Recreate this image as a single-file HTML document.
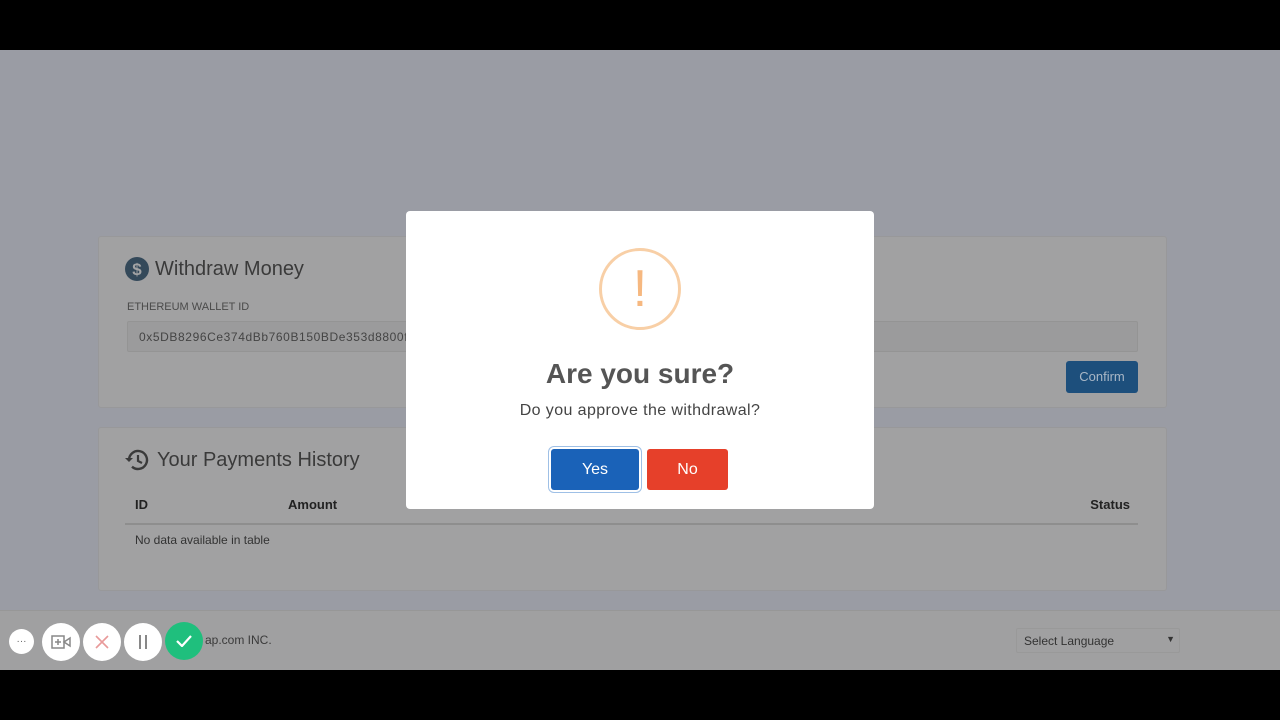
<!DOCTYPE html>
<html><head><meta charset="utf-8"><style>
*{box-sizing:border-box;margin:0;padding:0}
body{width:1280px;height:720px;background:#000;font-family:"Liberation Sans",sans-serif;position:relative;overflow:hidden}
.page{position:absolute;left:0;top:50px;width:1280px;height:620px;background:#9a9ca4}
.card{position:absolute;left:98px;width:1069px;background:#a1a1a2;border:1px solid #98989a;border-radius:3px}
.h{position:absolute;left:26px;font-size:20px;color:#3a3a3a;display:flex;align-items:center;gap:6px}
.footer{position:absolute;left:0;top:610px;width:1280px;height:60px;background:#a0a0a1;border-top:1px solid #979797}
.modal{position:absolute;left:406px;top:211px;width:468px;height:298px;background:#fff;border-radius:4px;text-align:center}
.btn{position:absolute;top:238px;height:41px;color:#fff;font-size:16px;line-height:41px;border-radius:3px}
.circ{position:absolute;top:623px;width:38px;height:38px;border-radius:50%;background:#fff;display:flex;align-items:center;justify-content:center}
</style></head><body>
<div class="page"></div>
<div class="card" style="top:236px;height:172px">
 <div class="h" style="top:20px"><svg width="24" height="24" viewBox="0 0 24 24"><circle cx="12" cy="12" r="12" fill="#34495a"/><text x="12" y="18" font-size="17" font-weight="bold" fill="#a3a3a4" text-anchor="middle" font-family="Liberation Sans">$</text></svg>Withdraw Money</div>
 <div style="position:absolute;left:28px;top:64px;font-size:11px;color:#4a4a4a">ETHEREUM WALLET ID</div>
 <div style="position:absolute;left:28px;top:84px;width:1011px;height:31px;border:1px solid #949494;background:#9b9b9c;border-radius:2px;font-size:12px;letter-spacing:0.6px;color:#444;padding:8px 11px">0x5DB8296Ce374dBb760B150BDe353d8800f</div>
 <div style="position:absolute;left:967px;top:124px;width:72px;height:32px;background:#1d4f7c;border-radius:3px;color:#a9b7c6;font-size:13px;line-height:32px;text-align:center">Confirm</div>
</div>
<div class="card" style="top:427px;height:164px">
 <div class="h" style="top:20px"><svg width="26" height="24" viewBox="0 0 26 24"><path d="M4 12a9 9 0 1 1 3 6.7" fill="none" stroke="#3a3a3a" stroke-width="2.4"/><path d="M0 10l4 4 4-4z" fill="#3a3a3a"/><path d="M13 7v6l4 2" fill="none" stroke="#3a3a3a" stroke-width="2.2"/></svg>Your Payments History</div>
 <div style="position:absolute;left:36px;top:69px;font-size:13px;font-weight:bold;color:#222">ID</div>
 <div style="position:absolute;left:189px;top:69px;font-size:13px;font-weight:bold;color:#222">Amount</div>
 <div style="position:absolute;right:36px;top:69px;font-size:13px;font-weight:bold;color:#222">Status</div>
 <div style="position:absolute;left:26px;top:95px;width:1013px;height:2px;background:#8e8e8e"></div>
 <div style="position:absolute;left:36px;top:105px;font-size:12px;color:#333">No data available in table</div>
</div>
<div class="footer">
 <div style="position:absolute;left:205px;top:22px;font-size:12px;color:#3a3a3a">ap.com INC.</div>
 <div style="position:absolute;left:1016px;top:17px;width:164px;height:25px;border:1px solid #999;border-radius:2px;font-size:12px;color:#333;padding:5px 7px">Select Language<span style="position:absolute;right:4px;top:5px;font-size:9px">▼</span></div>
</div>
<div class="circ" style="left:9px;top:629px;width:25px;height:25px;font-size:10px;color:#666">···</div>
<div class="circ" style="left:42px"><svg width="20" height="16" viewBox="0 0 20 16"><rect x="1" y="2" width="12" height="12" fill="none" stroke="#888" stroke-width="1.5"/><path d="M13 8l6-4v8z" fill="none" stroke="#888" stroke-width="1.5"/><path d="M7 5v6M4 8h6" stroke="#888" stroke-width="1.5"/></svg></div>
<div class="circ" style="left:83px"><svg width="14" height="14"><path d="M1 1l12 12M13 1L1 13" stroke="#e89a9a" stroke-width="1.6"/></svg></div>
<div class="circ" style="left:124px"><svg width="12" height="14"><path d="M3 0v14M9 0v14" stroke="#888" stroke-width="2"/></svg></div>
<div class="circ" style="left:165px;top:622px;width:38px;height:38px;background:#1fbf7d"><svg width="16" height="12"><path d="M1 6l5 5 9-10" fill="none" stroke="#fff" stroke-width="2.2"/></svg></div>
<div class="modal">
 <div style="position:absolute;left:193px;top:37px;width:82px;height:82px;border:3px solid #f8cfa6;border-radius:50%;color:#f6b880;font-size:52px;line-height:76px">!</div>
 <div style="position:absolute;left:0;width:468px;top:147px;font-size:28px;font-weight:bold;color:#555">Are you sure?</div>
 <div style="position:absolute;left:0;width:468px;top:191px;font-size:16px;letter-spacing:0.4px;color:#444">Do you approve the withdrawal?</div>
 <div class="btn" style="left:145px;width:88px;background:#1a62b8;box-shadow:0 0 0 2px #fff,0 0 0 3px #9fc0e6">Yes</div>
 <div class="btn" style="left:241px;width:81px;background:#e6402a">No</div>
</div>
</body></html>
